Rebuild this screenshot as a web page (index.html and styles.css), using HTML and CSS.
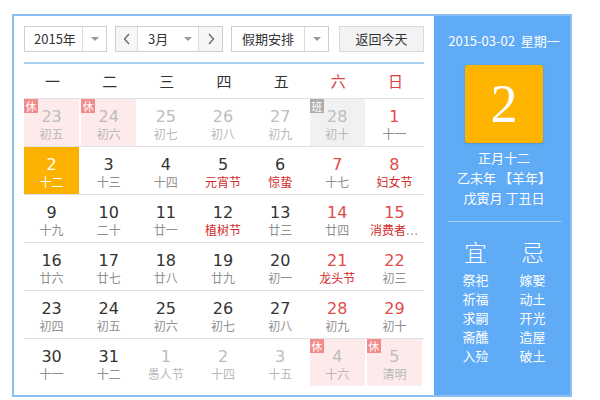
FILE: index.html
```html
<!DOCTYPE html>
<html lang="zh">
<head>
<meta charset="utf-8">
<link rel="stylesheet" href="styles.css">
</head>
<body>
<div class="cal">
  <div class="main">
    <div class="toolbar">
      <div class="select sel-year"><span class="sel-text">2015年</span><span class="sel-arrow"><i class="tri"></i></span></div>
      <div class="select sel-month">
        <span class="nav"><svg width="8" height="12" viewBox="0 0 8 12"><polyline points="6,1 1.5,6 6,11" fill="none" stroke="#666" stroke-width="1.3"/></svg></span>
        <span class="sel-text month-text">3月</span><span class="sel-arrow plain"><i class="tri"></i></span>
        <span class="nav"><svg width="8" height="12" viewBox="0 0 8 12"><polyline points="2,1 6.5,6 2,11" fill="none" stroke="#666" stroke-width="1.3"/></svg></span>
      </div>
      <div class="select sel-holiday"><span class="sel-text">假期安排</span><span class="sel-arrow"><i class="tri"></i></span></div>
      <div class="btn-today">返回今天</div>
    </div>
    <div class="rule"></div>
    <div class="weekdays">
      <span>一</span><span>二</span><span>三</span><span>四</span><span>五</span><span class="red">六</span><span class="red">日</span>
    </div>
    <div class="grid">
      <div class="cell"><div class="day other rest"><i class="badge">休</i><b>23</b><em>初五</em></div></div>
      <div class="cell"><div class="day other rest"><i class="badge">休</i><b>24</b><em>初六</em></div></div>
      <div class="cell"><div class="day other"><b>25</b><em>初七</em></div></div>
      <div class="cell"><div class="day other"><b>26</b><em>初八</em></div></div>
      <div class="cell"><div class="day other"><b>27</b><em>初九</em></div></div>
      <div class="cell"><div class="day other work"><i class="badge gray">班</i><b>28</b><em>初十</em></div></div>
      <div class="cell"><div class="day wkend"><b>1</b><em>十一</em></div></div>

      <div class="cell"><div class="day today"><b>2</b><em>十二</em></div></div>
      <div class="cell"><div class="day"><b>3</b><em>十三</em></div></div>
      <div class="cell"><div class="day"><b>4</b><em>十四</em></div></div>
      <div class="cell"><div class="day"><b>5</b><em class="fest">元宵节</em></div></div>
      <div class="cell"><div class="day"><b>6</b><em class="fest">惊蛰</em></div></div>
      <div class="cell"><div class="day wkend"><b>7</b><em>十七</em></div></div>
      <div class="cell"><div class="day wkend"><b>8</b><em class="fest">妇女节</em></div></div>

      <div class="cell"><div class="day"><b>9</b><em>十九</em></div></div>
      <div class="cell"><div class="day"><b>10</b><em>二十</em></div></div>
      <div class="cell"><div class="day"><b>11</b><em>廿一</em></div></div>
      <div class="cell"><div class="day"><b>12</b><em class="fest">植树节</em></div></div>
      <div class="cell"><div class="day"><b>13</b><em>廿三</em></div></div>
      <div class="cell"><div class="day wkend"><b>14</b><em>廿四</em></div></div>
      <div class="cell"><div class="day wkend"><b>15</b><em class="fest">消费者<span class="dots">...</span></em></div></div>

      <div class="cell"><div class="day"><b>16</b><em>廿六</em></div></div>
      <div class="cell"><div class="day"><b>17</b><em>廿七</em></div></div>
      <div class="cell"><div class="day"><b>18</b><em>廿八</em></div></div>
      <div class="cell"><div class="day"><b>19</b><em>廿九</em></div></div>
      <div class="cell"><div class="day"><b>20</b><em>初一</em></div></div>
      <div class="cell"><div class="day wkend"><b>21</b><em class="fest">龙头节</em></div></div>
      <div class="cell"><div class="day wkend"><b>22</b><em>初三</em></div></div>

      <div class="cell"><div class="day"><b>23</b><em>初四</em></div></div>
      <div class="cell"><div class="day"><b>24</b><em>初五</em></div></div>
      <div class="cell"><div class="day"><b>25</b><em>初六</em></div></div>
      <div class="cell"><div class="day"><b>26</b><em>初七</em></div></div>
      <div class="cell"><div class="day"><b>27</b><em>初八</em></div></div>
      <div class="cell"><div class="day wkend"><b>28</b><em>初九</em></div></div>
      <div class="cell"><div class="day wkend"><b>29</b><em>初十</em></div></div>

      <div class="cell"><div class="day"><b>30</b><em>十一</em></div></div>
      <div class="cell"><div class="day"><b>31</b><em>十二</em></div></div>
      <div class="cell"><div class="day other"><b>1</b><em>愚人节</em></div></div>
      <div class="cell"><div class="day other"><b>2</b><em>十四</em></div></div>
      <div class="cell"><div class="day other"><b>3</b><em>十五</em></div></div>
      <div class="cell"><div class="day other rest"><i class="badge">休</i><b>4</b><em>十六</em></div></div>
      <div class="cell"><div class="day other rest"><i class="badge">休</i><b>5</b><em>清明</em></div></div>
    </div>
  </div>
  <aside class="side">
    <div class="side-date">2015-03-02&nbsp; 星期一</div>
    <div class="big-day">2</div>
    <div class="lunar">
      <div>正月十二</div>
      <div>乙未年 【羊年】</div>
      <div>戊寅月 丁丑日</div>
    </div>
    <div class="side-rule"></div>
    <div class="yiji">
      <div class="yj-col">
        <div class="yj-head">宜</div>
        <div>祭祀</div><div>祈福</div><div>求嗣</div><div>斋醮</div><div>入殓</div>
      </div>
      <div class="yj-col">
        <div class="yj-head">忌</div>
        <div>嫁娶</div><div>动土</div><div>开光</div><div>造屋</div><div>破土</div>
      </div>
    </div>
  </aside>
</div>
</body>
</html>
```

FILE: styles.css
```css
* { box-sizing: border-box; }
html, body { margin: 0; padding: 0; background: #fff; }
body {
  font-family: "Noto Sans CJK SC", "Liberation Sans", sans-serif;
  color: #333;
}
.cal {
  margin: 14px 0 0 12px;
  width: 560px;
  height: 383px;
  border: 2px solid #8cc0f0;
  display: flex;
}
.main {
  width: 420px;
  padding: 10px 10px 0 10px;
}
.toolbar {
  display: flex;
  height: 26px;
  font-size: 13px;
  line-height: 24px;
}
.select {
  display: flex;
  border: 1px solid #cfcfcf;
  background: #fff;
  height: 26px;
}
.sel-year { width: 83px; margin-right: 8px; }
.sel-month { width: 108px; margin-right: 8px; }
.sel-holiday { width: 98px; margin-right: 10px; }
.sel-text { flex: 1; padding-left: 9px; color: #333; }
.sel-year .sel-text { padding-left: 9px; }
.sel-holiday .sel-text { padding-left: 10px; }
.sel-arrow {
  width: 24px;
  border-left: 1px solid #dcdcdc;
  display: flex;
  align-items: center;
  justify-content: center;
}
.sel-arrow.plain { border-left: none; width: 20px; }
.tri {
  width: 0; height: 0;
  border-left: 4px solid transparent;
  border-right: 4px solid transparent;
  border-top: 4px solid #999;
}
.nav {
  width: 22px;
  display: flex;
  align-items: center;
  justify-content: center;
  background: #f6f6f6;
}
.nav:first-child { border-right: 1px solid #dcdcdc; }
.nav:last-child { border-left: 1px solid #dcdcdc; width: 24px; }
.month-text { padding-left: 10px; }
.btn-today {
  width: 85px;
  height: 26px;
  border: 1px solid #dadada;
  background: #f3f3f3;
  text-align: center;
  color: #333;
}
.rule {
  margin-top: 10px;
  height: 2px;
  background: #a9d0f3;
}
.weekdays {
  display: grid;
  grid-template-columns: repeat(7, 1fr);
  height: 34px;
  line-height: 34px;
  font-size: 15px;
  text-align: center;
  color: #333;
}
.weekdays .red { color: #d9403f; }
.grid {
  display: grid;
  grid-template-columns: repeat(7, 1fr);
}
.cell {
  border-top: 1px solid #e1e1e1;
  height: 48px;
}
.day {
  position: relative;
  height: 47px;
  margin-right: 2px;
  text-align: center;
  padding-top: 9px;
}
.day b {
  display: block;
  font-family: "DejaVu Sans", "Liberation Sans", sans-serif;
  font-weight: normal;
  font-size: 16px;
  line-height: 18px;
  color: #333;
}
.day em {
  display: block;
  font-style: normal;
  font-size: 12px;
  line-height: 16px;
  color: #8f8f8f;
  white-space: nowrap;
}
.day .fest { color: #d22b2b; }
.dots { color: #999; letter-spacing: 1px; }
.day.wkend b { color: #e04b4b; }
.day.other b { color: #bdbdbd; }
.day.other em { color: #b8b8b8; }
.day.rest { background: #fdeaea; }
.day.work { background: #f1f1f1; }
.day.today { background: #fdb202; }
.day.today b, .day.today em { color: #fff; }
.badge {
  position: absolute;
  left: 0;
  top: 0;
  width: 14px;
  height: 14px;
  background: #f28b8b;
  color: #fff;
  font-style: normal;
  font-size: 11px;
  line-height: 14px;
  text-align: center;
}
.badge.gray { background: #adadad; }
.side {
  flex: 1;
  background: #60abf6;
  color: #fff;
  padding: 15px 0 0 4px;
  display: flex;
  flex-direction: column;
  align-items: center;
}
.side-date {
  font-size: 13px;
  line-height: 20px;
  white-space: nowrap;
}
.big-day {
  margin-top: 14px;
  width: 78px;
  height: 78px;
  background: #ffb400;
  border-radius: 3px;
  box-shadow: 0 1px 2px rgba(0,0,0,0.15);
  font-family: "Liberation Serif", serif;
  font-size: 54px;
  line-height: 78px;
  text-align: center;
  color: #fff;
}
.lunar {
  margin-top: 5px;
  font-size: 13px;
  line-height: 20px;
  text-align: center;
}
.side-rule {
  margin-top: 13px;
  width: 113px;
  height: 1px;
  background: #a6d2fd;
}
.yiji {
  margin-top: 14px;
  display: flex;
  gap: 13px;
}
.yj-col {
  width: 44px;
  text-align: center;
  font-size: 13px;
  line-height: 19px;
}
.yj-head {
  font-size: 23px;
  font-weight: 300;
  line-height: 30px;
  margin-bottom: 4px;
}
```
